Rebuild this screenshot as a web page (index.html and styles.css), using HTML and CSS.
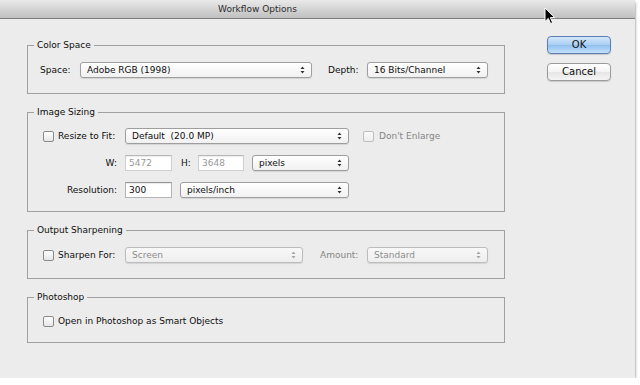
FILE: index.html
```html
<!DOCTYPE html>
<html lang="en">
<head>
    <meta charset="UTF-8">
    <meta name="viewport" content="width=device-width, initial-scale=1.0">
    <title>Workflow Options</title>
    <link rel="stylesheet" href="styles.css">
</head>
<body>
    <div class="window">
        <div class="titlebar">Workflow Options</div>

        <div class="dialog">
            <div class="groups">
                <fieldset class="group">
                    <legend>Color Space</legend>
                    <div class="group-body">
                        <div class="row">
                            <span class="lbl lbl-space">Space:</span>
                            <div class="popup w-space">Adobe RGB (1998)<svg class="arrows" width="5" height="8" viewBox="0 0 5 8"><path d="M0.5 3L2.5 0.5L4.5 3Z M0.5 5L2.5 7.5L4.5 5Z"/></svg></div>
                            <span class="lbl lbl-depth">Depth:</span>
                            <div class="popup w-depth">16 Bits/Channel<svg class="arrows" width="5" height="8" viewBox="0 0 5 8"><path d="M0.5 3L2.5 0.5L4.5 3Z M0.5 5L2.5 7.5L4.5 5Z"/></svg></div>
                        </div>
                    </div>
                </fieldset>

                <fieldset class="group">
                    <legend>Image Sizing</legend>
                    <div class="group-body sizing">
                        <div class="row">
                            <span class="lead"><span class="check"></span>Resize to Fit:</span>
                            <div class="popup w-fit">Default&nbsp; (20.0 MP)<svg class="arrows" width="5" height="8" viewBox="0 0 5 8"><path d="M0.5 3L2.5 0.5L4.5 3Z M0.5 5L2.5 7.5L4.5 5Z"/></svg></div>
                            <span class="check off enlarge"></span><span class="dim">Don't Enlarge</span>
                        </div>
                        <div class="row">
                            <span class="lead right">W:</span>
                            <div class="field off">5472</div>
                            <span class="lbl lbl-h">H:</span>
                            <div class="field off w-h">3648</div>
                            <div class="popup w-px">pixels<svg class="arrows" width="5" height="8" viewBox="0 0 5 8"><path d="M0.5 3L2.5 0.5L4.5 3Z M0.5 5L2.5 7.5L4.5 5Z"/></svg></div>
                        </div>
                        <div class="row">
                            <span class="lead right">Resolution:</span>
                            <div class="field">300</div>
                            <div class="popup w-res">pixels/inch<svg class="arrows" width="5" height="8" viewBox="0 0 5 8"><path d="M0.5 3L2.5 0.5L4.5 3Z M0.5 5L2.5 7.5L4.5 5Z"/></svg></div>
                        </div>
                    </div>
                </fieldset>

                <fieldset class="group">
                    <legend>Output Sharpening</legend>
                    <div class="group-body">
                        <div class="row">
                            <span class="lead"><span class="check"></span>Sharpen For:</span>
                            <div class="popup off w-screen">Screen<svg class="arrows" width="5" height="8" viewBox="0 0 5 8"><path d="M0.5 3L2.5 0.5L4.5 3Z M0.5 5L2.5 7.5L4.5 5Z"/></svg></div>
                            <span class="lbl lbl-amount dim">Amount:</span>
                            <div class="popup off w-depth">Standard<svg class="arrows" width="5" height="8" viewBox="0 0 5 8"><path d="M0.5 3L2.5 0.5L4.5 3Z M0.5 5L2.5 7.5L4.5 5Z"/></svg></div>
                        </div>
                    </div>
                </fieldset>

                <fieldset class="group last">
                    <legend>Photoshop</legend>
                    <div class="group-body ps">
                        <div class="row">
                            <span class="lead wide"><span class="check"></span>Open in Photoshop as Smart Objects</span>
                        </div>
                    </div>
                </fieldset>
            </div>

            <div class="buttons">
                <div class="btn default">OK</div>
                <div class="btn">Cancel</div>
            </div>
        </div>

        <svg class="cursor" width="12" height="18" viewBox="0 0 12 18"><path d="M1 1L1 14.5L4.3 11.4L6.6 16.6L8.6 15.7L6.4 10.6L10.8 10.6Z" fill="#000" stroke="#fff" stroke-width="1"/></svg>
    </div>
</body>
</html>
```

FILE: styles.css
```css
* {
    box-sizing: border-box;
}
body {
    margin: 0;
    background: #fff;
    font-family: "DejaVu Sans", sans-serif;
    font-size: 9px;
    color: #0e0e0e;
}
.window {
    position: relative;
    width: 635px;
    height: 378px;
    background: #ececec;
    border-radius: 4px 4px 0 0;
    box-shadow: 0 1px 3px rgba(0, 0, 0, 0.6);
}
.titlebar {
    height: 19px;
    line-height: 18px;
    padding-right: 120px;
    text-align: center;
    font-size: 9px;
    color: #2c2c2c;
    background: linear-gradient(#e9e9e9, #c0c0c0);
    border-bottom: 1px solid #7c7c7c;
    border-radius: 4px 4px 0 0;
}
.dialog {
    display: flex;
    align-items: flex-start;
    padding: 17px 0 0 27px;
}
.groups {
    width: 478px;
    margin-top: 3px;
}
.group {
    margin: 0 0 12px;
    padding: 0;
    min-width: 0;
    border: 1px solid #a0a0a0;
}
.group.last {
    margin-bottom: 0;
}
.group legend {
    margin-left: 6px;
    padding: 0 3px;
    line-height: 12px;
}
.group-body {
    padding: 11px 0 15px 12px;
}
.group-body.sizing {
    padding: 10px 0 13px 12px;
    display: flex;
    flex-direction: column;
    gap: 11px;
}
.group-body.ps {
    padding: 10px 0 13px 12px;
}
.row {
    display: flex;
    align-items: center;
    height: 16px;
}
.lbl {
    flex: none;
}
.lbl-space {
    width: 40px;
}
.lbl-depth {
    width: 39px;
    margin-left: 16px;
}
.lbl-amount {
    width: 47px;
    margin-left: 17px;
}
.lbl-h {
    width: 17px;
    margin-left: 9px;
}
.lead {
    flex: none;
    width: 85px;
    display: flex;
    align-items: center;
}
.lead.right {
    justify-content: flex-end;
    padding-right: 8px;
}
.lead.wide {
    width: auto;
}
.dim {
    color: #858585;
}
.check {
    flex: none;
    display: inline-block;
    width: 11px;
    height: 11px;
    margin: 0 4px 0 3px;
    border: 1px solid #8a8a8a;
    border-radius: 2px;
    background: linear-gradient(#ffffff, #e6e6e6);
}
.check.off {
    border-color: #bdbdbd;
    background: linear-gradient(#fafafa, #eeeeee);
}
.check.enlarge {
    margin: 0 5px 0 14px;
}
.popup {
    flex: none;
    height: 16px;
    display: flex;
    align-items: center;
    justify-content: space-between;
    padding: 0 6px 0 6px;
    border: 1px solid #9e9e9e;
    border-radius: 3px;
    background: linear-gradient(#ffffff, #f1f1f1);
    box-shadow: 0 1px 1px rgba(0, 0, 0, 0.1);
    white-space: pre;
}
.popup .arrows {
    fill: #333;
}
.popup.off {
    color: #8c8c8c;
    border-color: #bcbcbc;
    background: linear-gradient(#f8f8f8, #eeeeee);
}
.popup.off .arrows {
    fill: #a5a5a5;
}
.w-space {
    width: 232px;
}
.w-depth {
    width: 121px;
}
.w-fit {
    width: 224px;
}
.w-px {
    width: 97px;
    margin-left: 8px;
}
.w-res {
    width: 169px;
    margin-left: 8px;
}
.w-screen {
    width: 178px;
}
.field {
    flex: none;
    width: 47px;
    height: 16px;
    line-height: 14px;
    padding-left: 3px;
    background: #fff;
    border: 1px solid #b4b4b4;
    border-top-color: #949494;
    box-shadow: inset 0 1px 1px rgba(0, 0, 0, 0.08);
}
.field.off {
    color: #999;
    border-color: #cfcfcf;
    border-top-color: #b8b8b8;
}
.field.w-h {
    width: 46px;
}
.buttons {
    margin-left: 42px;
    display: flex;
    flex-direction: column;
    gap: 9px;
}
.btn {
    width: 64px;
    height: 18px;
    line-height: 16px;
    text-align: center;
    font-size: 10px;
    color: #111;
    border: 1px solid #9b9b9b;
    border-radius: 4px;
    background: linear-gradient(#ffffff, #f3f3f3 50%, #e6e6e6 51%, #f4f4f4);
    box-shadow: 0 1px 1px rgba(0, 0, 0, 0.15);
}
.btn.default {
    border-color: #5a7db4;
    background: linear-gradient(#d4e7fb, #aacdf3 50%, #8fbfee 51%, #c4e1fb);
}
.cursor {
    position: absolute;
    left: 544px;
    top: 7px;
}
```
